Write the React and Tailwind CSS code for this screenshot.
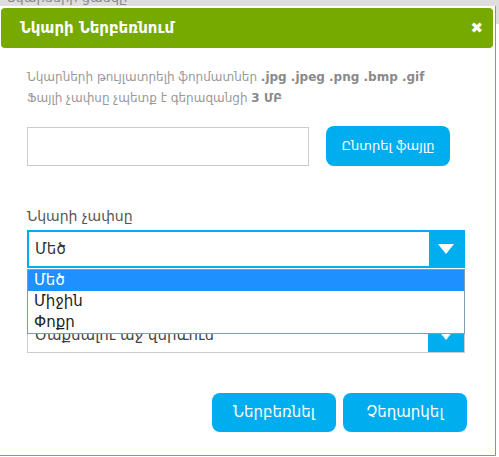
import React from "react";

const Arrow = () => (
  <svg width="16" height="10" viewBox="0 0 16 10" className="block">
    <path d="M0 0 H16 L8 10 Z" fill="#fff" />
  </svg>
);

const options = ["Մեծ", "Միջին", "Փոքր"];

const App = () => {
  return (
    <div className="w-[499px] h-[457px] overflow-hidden bg-white font-['DejaVu_Sans',sans-serif] flex flex-col">
      {/* page behind */}
      <div className="h-[6px] bg-[#dedede] overflow-hidden flex-none">
        <div className="-mt-[9px] pl-[6px] text-[13px] text-[#888] leading-[14px]">Նկարների ցանկը</div>
      </div>

      <div className="flex flex-1 min-h-0">
        <div className="w-[496px] h-[450px] flex-none bg-white border-r border-b border-[#86b100] pt-[2px] pl-[1px] pr-[2px] flex flex-col">
          {/* header */}
          <div className="h-[40px] rounded-[4px] bg-[#77aa00] flex items-center justify-between pl-[19px] pr-[10px] flex-none">
            <span className="text-white font-bold text-[15px]">Նկարի Ներբեռնում</span>
            <span className="text-white font-bold text-[15px] leading-none">✖</span>
          </div>

          <div className="pl-[26px] pr-[28px] flex flex-col">
            <div className="mt-[19px] text-[12px] leading-[21px] text-[#999]">
              <div>
                Նկարների թույլատրելի ֆորմատներ{" "}
                <b className="text-[#8a8a8a]">.jpg .jpeg .png .bmp .gif</b>
              </div>
              <div>
                Ֆայլի չափսը չպետք է գերազանցի <b className="text-[#8a8a8a]">3 ՄԲ</b>
              </div>
            </div>

            <div className="mt-[17px] flex items-center gap-[17px]">
              <div className="w-[282px] h-[39px] border border-[#cccccc] bg-white" />
              <button className="w-[124px] h-[40px] rounded-[8px] bg-[#00aeef] text-white text-[13px]">
                Ընտրել ֆայլը
              </button>
            </div>

            <div className="mt-[40px] text-[14px] text-[#555]">Նկարի չափսը</div>

            <div className="relative mt-[3px]">
              <div className="h-[38px] border-2 border-[#00aeef] flex">
                <div className="flex-1 flex items-center pl-[6px] text-[15px] text-[#333]">Մեծ</div>
                <div className="w-[34px] bg-[#00aeef] flex items-center justify-center">
                  <Arrow />
                </div>
              </div>

              {/* second select, under the open list */}
              <div className="mt-[48px] h-[37px] border border-[#cccccc] flex">
                <div className="flex-1 flex items-end pb-[6px] pl-[6px] text-[15px] text-[#444]">Ծաքսալու աջ վերևում</div>
                <div className="w-[36px] bg-[#00aeef] flex items-center justify-center">
                  <Arrow />
                </div>
              </div>

              {/* open dropdown */}
              <div className="absolute left-0 right-0 top-[39px] border border-[#7f9db9] bg-white text-[15px] text-[#222]">
                {options.map((o, i) => (
                  <div
                    key={o}
                    className={`h-[21px] leading-[21px] pl-[6px] ${i === 0 ? "bg-[#1e90ff] text-white" : ""}`}
                  >
                    {o}
                  </div>
                ))}
              </div>
            </div>

            <div className="mt-[40px] -mr-[2px] flex justify-end gap-[7px]">
              <button className="w-[124px] h-[39px] rounded-[8px] bg-[#00aeef] text-white text-[15px]">
                Ներբեռնել
              </button>
              <button className="w-[124px] h-[39px] rounded-[8px] bg-[#00aeef] text-white text-[15px]">
                Չեղարկել
              </button>
            </div>
          </div>
        </div>
        <div className="flex-1 flex flex-col">
          <div className="h-[18px] bg-[#dedede]" />
          <div className="flex-1 bg-white" />
        </div>
      </div>
    </div>
  );
};

export default App;
